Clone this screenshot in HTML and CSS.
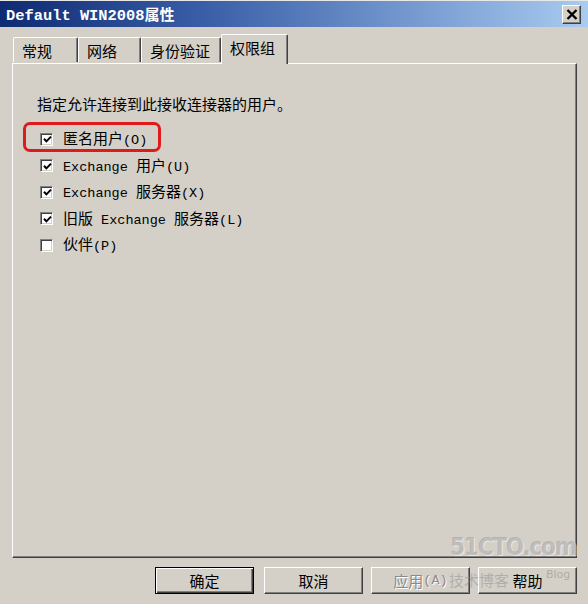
FILE: index.html
```html
<!DOCTYPE html>
<html>
<head>
<meta charset="utf-8">
<link rel="stylesheet" href="styles.css">
</head>
<body>
<div class="window">
  <div class="titlebar">
    <span class="title"><span class="tlat">Default WIN2008</span>属性</span>
    <span class="close"><svg width="12" height="11" viewBox="0 0 12 11"><path d="M1.5 1 L10.5 10 M10.5 1 L1.5 10" stroke="#000" stroke-width="2.4"/></svg></span>
  </div>
  <div class="tabs">
    <div class="tab t1">常规</div>
    <div class="tab t2">网络</div>
    <div class="tab t3">身份验证</div>
    <div class="tab sel">权限组</div>
  </div>
  <div class="panel">
    <div class="desc">指定允许连接到此接收连接器的用户。</div>
    <div class="row"><span class="cb"><svg width="9" height="9" viewBox="0 0 9 9"><path d="M1 3.8 L3.4 6.4 L8 1.6" stroke="#000" stroke-width="2" fill="none"/></svg></span><span class="lbl">匿名用户<span class="lat">(O)</span></span></div>
    <div class="row"><span class="cb"><svg width="9" height="9" viewBox="0 0 9 9"><path d="M1 3.8 L3.4 6.4 L8 1.6" stroke="#000" stroke-width="2" fill="none"/></svg></span><span class="lbl"><span class="lat">Exchange </span>用户<span class="lat">(U)</span></span></div>
    <div class="row"><span class="cb"><svg width="9" height="9" viewBox="0 0 9 9"><path d="M1 3.8 L3.4 6.4 L8 1.6" stroke="#000" stroke-width="2" fill="none"/></svg></span><span class="lbl"><span class="lat">Exchange </span>服务器<span class="lat">(X)</span></span></div>
    <div class="row"><span class="cb"><svg width="9" height="9" viewBox="0 0 9 9"><path d="M1 3.8 L3.4 6.4 L8 1.6" stroke="#000" stroke-width="2" fill="none"/></svg></span><span class="lbl">旧版<span class="lat"> Exchange </span>服务器<span class="lat">(L)</span></span></div>
    <div class="row"><span class="cb"></span><span class="lbl">伙伴<span class="lat">(P)</span></span></div>
    <div class="mark"></div>
  </div>
  <div class="buttons">
    <div class="btn default"><span>确定</span></div>
    <div class="btn">取消</div>
    <div class="btn disabled">应用<span class="lat">(A)</span></div>
    <div class="btn">帮助</div>
  </div>
  <div class="wm1">51CTO.com</div>
  <div class="wm2">技术博客</div>
  <div class="wm3">Blog</div>
</div>
</body>
</html>
```

FILE: styles.css
```css
html, body {
  margin: 0;
  padding: 0;
  background: #d4d0c8;
}
.window {
  position: relative;
  width: 588px;
  height: 604px;
  overflow: hidden;
  background: #d4d0c8;
  display: flex;
  flex-direction: column;
  font-family: "Noto Sans CJK SC", "DejaVu Sans", sans-serif;
  font-size: 15px;
  color: #000;
}
.titlebar {
  height: 27px;
  flex: none;
  background: linear-gradient(to right, #0e2a72 0%, #3a5fa8 35%, #a8cbf0 100%);
  display: flex;
  align-items: center;
  justify-content: space-between;
  padding: 0 7px 0 6px;
  border-top: 1px solid #e8e8e8;
  box-sizing: border-box;
}
.title {
  color: #fff;
  font-weight: bold;
  font-size: 15px;
  white-space: nowrap;
}
.tlat {
  font-family: "Liberation Mono", monospace;
  font-size: 15.4px;
  font-weight: bold;
}
.close {
  width: 17px;
  height: 17px;
  background: #d4d0c8;
  border-top: 1px solid #fff;
  border-left: 1px solid #fff;
  border-right: 1px solid #404040;
  border-bottom: 1px solid #404040;
  box-shadow: inset -1px -1px #808080;
  display: flex;
  align-items: center;
  justify-content: center;
}
.tabs {
  display: flex;
  align-items: flex-end;
  height: 29px;
  margin: 7px 0 0 13px;
  position: relative;
  z-index: 2;
}
.tab {
  height: 25px;
  box-sizing: border-box;
  border-top: 1px solid #fff;
  border-left: 1px solid #fff;
  border-right: 1px solid #404040;
  box-shadow: inset -1px 0 #808080;
  border-radius: 2px 2px 0 0;
  display: flex;
  align-items: center;
  padding-left: 8px;
  margin-bottom: 1px;
  line-height: 1;
}
.t1 { width: 65px; }
.t2 { width: 63px; }
.t3 { width: 80px; }
.sel {
  width: 67px;
  height: 30px;
  margin-bottom: -1px;
  background: #d4d0c8;
  padding-left: 8px;
  padding-bottom: 4px;
}
.panel {
  position: relative;
  height: 495px;
  flex: none;
  margin: 0 11px 0 12px;
  box-sizing: border-box;
  border-top: 1px solid #fff;
  border-left: 1px solid #fff;
  border-right: 1px solid #404040;
  border-bottom: 1px solid #404040;
  box-shadow: inset -1px -1px #808080;
  padding: 31px 0 0 24px;
}
.desc {
  height: 17px;
  line-height: 17px;
  margin-bottom: 14px;
  white-space: nowrap;
}
.row {
  height: 26.5px;
  display: flex;
  align-items: center;
  gap: 10px;
  padding-left: 3px;
  white-space: nowrap;
}
.lbl {
  line-height: 17px;
}
.lat {
  font-family: "Liberation Mono", monospace;
  font-size: 13.5px;
}
.cb {
  width: 13px;
  height: 13px;
  box-sizing: border-box;
  background: #fff;
  border-top: 1px solid #808080;
  border-left: 1px solid #808080;
  border-right: 1px solid #fff;
  border-bottom: 1px solid #fff;
  box-shadow: inset 1px 1px #404040, inset -1px -1px #d4d0c8;
  flex: none;
  display: flex;
  align-items: center;
  justify-content: center;
  padding: 1px 0 0 1px;
}
.cb svg {
  display: block;
}
.mark {
  position: absolute;
  left: 10px;
  top: 58px;
  width: 138px;
  height: 30px;
  box-sizing: border-box;
  border: 3px solid #e0191b;
  border-radius: 7px;
}
.buttons {
  display: flex;
  justify-content: flex-end;
  gap: 8px;
  margin-top: 9px;
  padding-right: 11px;
}
.btn {
  width: 99px;
  height: 27px;
  box-sizing: border-box;
  border-top: 1px solid #fff;
  border-left: 1px solid #fff;
  border-right: 1px solid #404040;
  border-bottom: 1px solid #404040;
  box-shadow: inset -1px -1px #808080;
  display: flex;
  align-items: center;
  justify-content: center;
  line-height: 1;
}
.btn.default {
  margin-right: 2px;
  border: 1px solid #000;
  box-shadow: inset 1px 1px #fff, inset -1px -1px #404040, inset -2px -2px #808080;
}
.btn.disabled {
  color: #8a8a8a;
  text-shadow: 1px 1px #fff;
}
.wm1 {
  position: absolute;
  left: 450px;
  top: 533px;
  font-family: "DejaVu Sans Condensed", "DejaVu Sans", sans-serif;
  font-weight: bold;
  font-size: 24px;
  letter-spacing: -1.2px;
  color: rgba(150, 150, 150, 0.5);
  text-shadow: 1px 1px rgba(255,255,255,0.5);
  pointer-events: none;
}
.wm2 {
  position: absolute;
  left: 449px;
  top: 571px;
  font-size: 15px;
  line-height: 18px;
  color: rgba(140, 140, 140, 0.5);
  pointer-events: none;
}
.wm3 {
  position: absolute;
  left: 546px;
  top: 568px;
  font-family: "DejaVu Sans", sans-serif;
  font-size: 11px;
  color: rgba(140, 140, 140, 0.55);
  pointer-events: none;
}
```
